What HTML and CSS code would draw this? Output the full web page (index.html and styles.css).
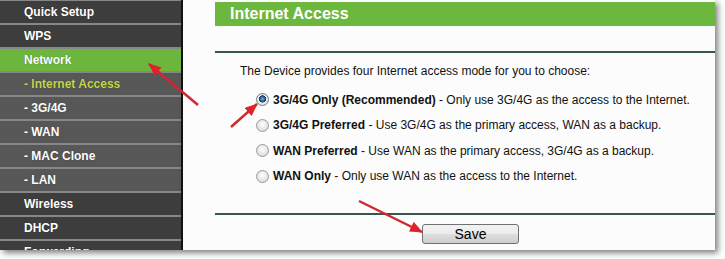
FILE: index.html
```html
<!DOCTYPE html>
<html lang="en">
<head>
<meta charset="utf-8">
<title>Internet Access</title>
<link rel="stylesheet" href="styles.css">
</head>
<body>
<div class="shot">
  <nav class="menu">
    <div class="item first">Quick Setup</div>
    <div class="item">WPS</div>
    <div class="item active">Network</div>
    <div class="item sub current">- Internet Access</div>
    <div class="item sub">- 3G/4G</div>
    <div class="item sub">- WAN</div>
    <div class="item sub">- MAC Clone</div>
    <div class="item sub">- LAN</div>
    <div class="item">Wireless</div>
    <div class="item">DHCP</div>
    <div class="item">Forwarding</div>
  </nav>
  <main class="content">
    <div class="title-bar">Internet Access</div>
    <div class="rule rule-top"></div>
    <p class="intro">The Device provides four Internet access mode for you to choose:</p>
    <ul class="options">
      <li><label><input type="radio" name="mode" checked><b>3G/4G Only (Recommended)</b>&nbsp;- Only use 3G/4G as the access to the Internet.</label></li>
      <li><label><input type="radio" name="mode"><b>3G/4G Preferred</b>&nbsp;- Use 3G/4G as the primary access, WAN as a backup.</label></li>
      <li><label><input type="radio" name="mode"><b>WAN Preferred</b>&nbsp;- Use WAN as the primary access, 3G/4G as a backup.</label></li>
      <li><label><input type="radio" name="mode"><b>WAN Only</b>&nbsp;- Only use WAN as the access to the Internet.</label></li>
    </ul>
    <div class="rule rule-bottom"></div>
    <div class="actions"><button type="button" class="save">Save</button></div>
  </main>
  <svg class="arrows" width="715" height="250" viewBox="0 0 715 250">
    <defs>
      <marker id="head" viewBox="0 0 12 10" refX="11" refY="5" markerWidth="13" markerHeight="11" markerUnits="userSpaceOnUse" orient="auto">
        <path d="M0,0 L12,5 L0,10 Z" fill="#e0222b"/>
      </marker>
    </defs>
    <line x1="198" y1="105" x2="149" y2="64" stroke="#d0282f" stroke-width="2.5" marker-end="url(#head)"/>
    <line x1="231" y1="127" x2="257" y2="104" stroke="#d0282f" stroke-width="2.5" marker-end="url(#head)"/>
    <line x1="359" y1="201" x2="422" y2="232" stroke="#d0282f" stroke-width="2.5" marker-end="url(#head)"/>
  </svg>
</div>
</body>
</html>
```
FILE: styles.css
```css
* { box-sizing: border-box; }

html, body {
  margin: 0;
  padding: 0;
  background: #ffffff;
}

body {
  width: 725px;
  height: 259px;
  overflow: hidden;
  font-family: "Liberation Sans", Arial, sans-serif;
}

.shot {
  position: relative;
  width: 715px;
  height: 250px;
  display: flex;
  overflow: hidden;
  background: #fcfcfc;
  box-shadow: 3px 3px 6px rgba(0, 0, 0, 0.5);
}

/* Sidebar */
.menu {
  width: 183px;
  flex: none;
  border-right: 2px solid #111;
  background: #3b3b3b;
  overflow: hidden;
}

.item {
  height: 24px;
  line-height: 22px;
  padding-left: 24px;
  border-bottom: 2px solid #878787;
  background: #3d3d3d;
  color: #ffffff;
  font-size: 12px;
  font-weight: bold;
  white-space: nowrap;
  text-shadow: 0 0 1px rgba(0, 0, 0, 0.4);
}

.item.first {
  height: 25px;
  border-top: 1px solid #878787;
}

.item.active {
  background: #6cb63d;
}

.item.sub {
  background: #575757;
}

.item.current {
  color: #c2d64a;
}

/* Content */
.content {
  flex: 1;
  padding-left: 32px;
  background: #fcfcfc;
}

.title-bar {
  margin-top: 2px;
  height: 24px;
  line-height: 24px;
  padding-left: 15px;
  background: #6cb73e;
  color: #ffffff;
  font-size: 16px;
  font-weight: bold;
}

.rule {
  height: 2px;
  background: #36564b;
}

.rule-top {
  margin-top: 25px;
}

.intro {
  margin: 11px 0 0 25px;
  font-size: 12px;
  line-height: 14px;
  color: #111;
}

.options {
  list-style: none;
  margin: 9px 0 0 41px;
  padding: 0;
}

.options li {
  height: 25.5px;
}

.options label {
  display: flex;
  align-items: center;
  height: 25.5px;
  font-size: 12px;
  color: #111;
  white-space: nowrap;
}

.options b {
  font-weight: bold;
}

.options input {
  -webkit-appearance: none;
  appearance: none;
  width: 13px;
  height: 13px;
  margin: 0 4px 0 0;
  border: 1px solid #9a9a9a;
  border-radius: 50%;
  background: radial-gradient(circle at 50% 40%, #ffffff 0%, #e6e6e6 55%, #cfcfcf 100%);
  flex: none;
}

.options input:checked {
  border-color: #6e7f8c;
  background: radial-gradient(circle at 50% 45%, #7fb6dd 0%, #24557e 32%, #143a5c 42%, #e8eef2 46%, #d3d7da 100%);
}

.rule-bottom {
  margin-top: 24px;
}

.actions {
  padding: 9px 0 0 207px;
}

.save {
  width: 97px;
  height: 20px;
  padding: 0;
  border: 1px solid #707070;
  border-radius: 3px;
  background: linear-gradient(#f3f3f3, #ebebeb 50%, #dddddd 51%, #cfcfcf);
  font-family: "Liberation Sans", Arial, sans-serif;
  font-size: 14px;
  line-height: 18px;
  color: #000;
}

/* Annotation arrows */
.arrows {
  position: absolute;
  left: 0;
  top: 0;
  pointer-events: none;
}
```
